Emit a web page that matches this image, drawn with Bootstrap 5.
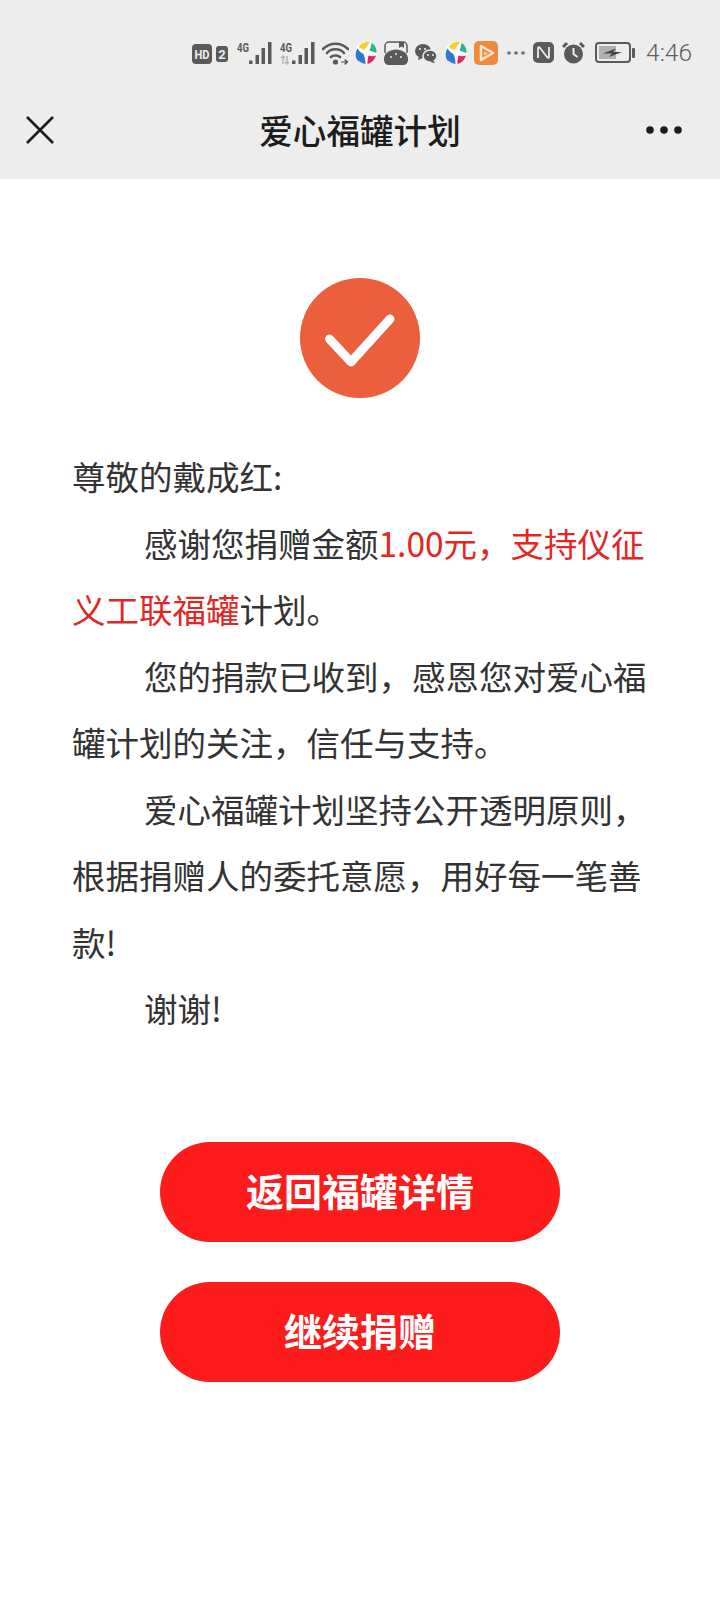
<!DOCTYPE html>
<html lang="zh-CN">
  <head>
    <meta charset="UTF-8" />
    <meta name="viewport" content="width=device-width, initial-scale=1.0" />
    <title>爱心福罐计划</title>
    <link href="https://cdn.jsdelivr.net/npm/bootstrap@5.3.0/dist/css/bootstrap.min.css" rel="stylesheet" />
    <style>
      body {
        font-family: "Noto Sans CJK SC", "Liberation Sans", sans-serif;
        background-color: #fff;
        color: #333;
      }
      .top-area {
        height: 179px;
        background-color: #ededed;
      }
      .status-row {
        height: 86px;
        padding-top: 41px;
        padding-right: 28px;
        gap: 8px;
        color: #5a5a5a;
      }
      .status-row svg {
        display: block;
        flex: none;
      }
      .tight-1 { margin-right: -1px; }
      .tight-2 { margin-right: -2px; }
      .wide-1 { margin-right: 1px; }
      .wide-2 { margin-right: 2px; }
      .status-time {
        font-family: Roboto, "Liberation Sans", sans-serif;
        font-weight: 300;
        font-size: 24.5px;
        line-height: 24px;
        color: #5f5f5f;
      }
      .title-row {
        height: 88px;
        padding: 0 26px;
      }
      .title-side {
        flex: 1 1 0;
      }
      .dots-icon {
        margin-right: 12px;
      }
      .page-title {
        font-size: 33.6px;
        font-weight: 500;
        color: #1c1c1c;
      }
      .done-circle {
        width: 120px;
        height: 120px;
        margin: 99px auto 0;
        background-color: #ec5f3c;
      }
      .message {
        margin: 45px 72px 0;
        font-size: 33.5px;
        line-height: 66.5px;
      }
      .message p {
        margin: 0;
        text-indent: 72px;
      }
      .message p.greeting {
        text-indent: 0;
      }
      .hot-text {
        color: #e3261f;
      }
      .btn-stack {
        margin-top: 100px;
        gap: 40px;
      }
      .btn-pill {
        width: 400px;
        height: 100px;
        padding-bottom: 10px;
        border-radius: 50px;
        border: 0;
        background-color: #fd1b1b;
        color: #fff;
        font-size: 38px;
        font-weight: 700;
      }
    </style>
  </head>
  <body>
    <div class="top-area">
      <div class="status-row d-flex justify-content-end align-items-start">
        <svg width="36" height="24" viewBox="0 0 36 24" class="wide-1">
          <rect y="3" width="20" height="20" rx="4" fill="#5a5a5a" />
          <text x="2.500" y="18" font-size="13" font-weight="700" font-family="Roboto" textLength="15" lengthAdjust="spacingAndGlyphs" fill="#ededed">HD</text>
          <rect x="24" y="5" width="12" height="16" rx="3" fill="#5a5a5a" />
          <text x="30" y="18" font-size="13" font-weight="700" font-family="Roboto" text-anchor="middle" fill="#ededed">2</text>
        </svg>
        <svg width="35" height="24" viewBox="0 0 35 24">
          <text x="0" y="11" font-size="13" font-weight="700" font-family="Roboto" textLength="12" lengthAdjust="spacingAndGlyphs" fill="#5a5a5a">4G</text>
          <path d="M12 19.500h3.500V23H12zM18.500 14H22v9h-3.500zM24.500 7H28v16h-3.500zM31 1h3.500v22H31z" fill="#5a5a5a" />
        </svg>
        <svg width="35" height="24" viewBox="0 0 35 24" class="tight-1">
          <text x="0" y="11" font-size="13" font-weight="700" font-family="Roboto" textLength="12" lengthAdjust="spacingAndGlyphs" fill="#5a5a5a">4G</text>
          <path d="M3 15v8M1 17l2-2 2 2M7 15v8M5 21l2 2 2-2" fill="none" stroke="#b5b5b5" stroke-width="1.500" />
          <path d="M12 19.500h3.500V23H12zM18.500 14H22v9h-3.500zM24.500 7H28v16h-3.500zM31 1h3.500v22H31z" fill="#5a5a5a" />
        </svg>
        <svg width="27" height="24" viewBox="0 0 27 24" class="tight-2">
          <path d="M1 8c7-7 18-7 25 0M5 12c4-5 13-5 17 0M9 16c2-2 7-2 9 0" fill="none" stroke="#5a5a5a" stroke-width="2.600" stroke-linecap="round" />
          <circle cx="13.500" cy="21" r="2.600" fill="#5a5a5a" />
          <path d="M19 21h3M23 18.500l3 2.500-3 2.500z" fill="#5a5a5a" stroke="#5a5a5a" stroke-width="1" />
        </svg>
        <svg width="22" height="24" viewBox="0 0 22 24" class="tight-1">
          <circle cx="11" cy="12" r="11" fill="#fff" />
          <path d="M3.500 6C6 2 11 0 15 1.500L9 9C7 8 5 7 3.500 6z" fill="#f5cf2a" />
          <path d="M16.500 2C20 4 22 8 21.500 12L14.500 9.500C15.500 7 16 5 16.500 2z" fill="#27b58c" />
          <path d="M21 14.500C20 18 17 22 12.500 23 12 21 13 17 13.500 14.500 16 15.500 18.500 15.500 21 14.500z" fill="#e5265d" />
          <path d="M2.500 7.500C0 11 0 16 2.500 19.500 5 21 8 22.500 10.500 23 10.500 19 9.500 15.500 8.500 13 6 12 4 10 2.500 7.500z" fill="#2e79d6" />
        </svg>
        <svg width="24" height="24" viewBox="0 0 24 24" class="tight-1">
          <path d="M1 12V5a4 4 0 0 1 4-4h14a4 4 0 0 1 4 4v7" fill="none" stroke="#5a5a5a" stroke-width="1.500" />
          <path d="M15 1h5v6l-2.500-1.500L15 7z" fill="#5a5a5a" />
          <path d="M0 18C0 12 6 8.500 12 8.500S24 12 24 18c0 4-2 6-5 6H5c-3 0-5-2-5-6z" fill="#5a5a5a" />
          <circle cx="7" cy="16" r="1" fill="#ededed" /><circle cx="12" cy="13" r="1" fill="#ededed" /><circle cx="17" cy="16" r="1" fill="#ededed" />
        </svg>
        <svg width="22" height="24" viewBox="0 0 22 24">
          <ellipse cx="8" cy="10" rx="8" ry="7" fill="#5a5a5a" />
          <path d="M4 15l-1 4 5-2z" fill="#5a5a5a" />
          <ellipse cx="15" cy="15" rx="7" ry="6" fill="#5a5a5a" stroke="#ededed" stroke-width="1.500" />
          <path d="M18 19l2 3-5-1z" fill="#5a5a5a" />
          <circle cx="5" cy="8" r="1.100" fill="#ededed" /><circle cx="10" cy="8" r="1.100" fill="#ededed" />
          <circle cx="13" cy="14" r="1" fill="#ededed" /><circle cx="18" cy="14" r="1" fill="#ededed" />
        </svg>
        <svg width="22" height="24" viewBox="0 0 22 24" class="tight-1">
          <circle cx="11" cy="12" r="11" fill="#fff" />
          <path d="M3.500 6C6 2 11 0 15 1.500L9 9C7 8 5 7 3.500 6z" fill="#f5cf2a" />
          <path d="M16.500 2C20 4 22 8 21.500 12L14.500 9.500C15.500 7 16 5 16.500 2z" fill="#27b58c" />
          <path d="M21 14.500C20 18 17 22 12.500 23 12 21 13 17 13.500 14.500 16 15.500 18.500 15.500 21 14.500z" fill="#e5265d" />
          <path d="M2.500 7.500C0 11 0 16 2.500 19.500 5 21 8 22.500 10.500 23 10.500 19 9.500 15.500 8.500 13 6 12 4 10 2.500 7.500z" fill="#2e79d6" />
        </svg>
        <svg width="24" height="24" viewBox="0 0 24 24" class="wide-1">
          <rect width="24" height="24" rx="5" fill="#f08a3c" />
          <path d="M7 5l12 7-12 7z" fill="#f08a3c" stroke="#fde6cf" stroke-width="2.500" stroke-linejoin="round" />
          <path d="M10 10.500l4 2-4 2z" fill="#fbd3a8" />
        </svg>
        <svg width="18" height="24" viewBox="0 0 18 24">
          <circle cx="2" cy="12" r="1.800" fill="#6e6e6e" /><circle cx="9" cy="12" r="1.800" fill="#6e6e6e" /><circle cx="16" cy="12" r="1.800" fill="#6e6e6e" />
        </svg>
        <svg width="21" height="24" viewBox="0 0 21 24">
          <rect y="1" width="21" height="21" rx="5" fill="#5a5a5a" />
          <path d="M5 17V7c0-1 1-1 2 0l7 9c1 1 2 1 2 0V6" fill="none" stroke="#ededed" stroke-width="1.800" />
        </svg>
        <svg width="23" height="24" viewBox="0 0 23 24" class="wide-2">
          <circle cx="11.500" cy="13" r="9.500" fill="#5a5a5a" />
          <path d="M11.500 7v6l4 3" fill="none" stroke="#ededed" stroke-width="2" />
          <path d="M1 6l4-4M22 6l-4-4" stroke="#5a5a5a" stroke-width="3" />
        </svg>
        <svg width="41" height="24" viewBox="0 0 41 24" class="wide-2">
          <rect x="1" y="2" width="34" height="19" rx="3" fill="none" stroke="#5a5a5a" stroke-width="2" />
          <rect x="4" y="5" width="17" height="13" fill="#b0b0b0" />
          <path d="M8 12.500l13-5-3 3.500h9l-13 5 3-3.500z" fill="#444" />
          <rect x="37" y="7" width="3" height="10" rx="1" fill="#5a5a5a" />
        </svg>
        <span class="status-time">4:46</span>
      </div>
      <div class="title-row d-flex align-items-center">
        <div class="title-side">
          <svg class="d-block" width="28" height="28" viewBox="0 0 28 28">
            <path d="M1 1l26 26M27 1L1 27" stroke="#1c1c1c" stroke-width="2.600" />
          </svg>
        </div>
        <span class="page-title">爱心福罐计划</span>
        <div class="title-side d-flex justify-content-end">
          <svg class="d-block dots-icon" width="36" height="8" viewBox="0 0 36 8">
            <circle cx="4" cy="4" r="3.800" fill="#1c1c1c" /><circle cx="18" cy="4" r="3.800" fill="#1c1c1c" /><circle cx="32" cy="4" r="3.800" fill="#1c1c1c" />
          </svg>
        </div>
      </div>
    </div>

    <div class="done-circle rounded-circle d-flex align-items-center justify-content-center">
      <svg width="120" height="120" viewBox="0 0 120 120">
        <path d="M29.500 61L51 84 90 41" fill="none" stroke="#fff" stroke-width="9" stroke-linecap="round" stroke-linejoin="round" />
      </svg>
    </div>

    <div class="message">
      <p class="greeting">尊敬的戴成红:</p>
      <p>感谢您捐赠金额<span class="hot-text">1.00元，支持仪征义工联福罐</span>计划。</p>
      <p>您的捐款已收到，感恩您对爱心福罐计划的关注，信任与支持。</p>
      <p>爱心福罐计划坚持公开透明原则，根据捐赠人的委托意愿，用好每一笔善款!</p>
      <p>谢谢!</p>
    </div>

    <div class="btn-stack d-flex flex-column align-items-center">
      <button type="button" class="btn btn-pill">返回福罐详情</button>
      <button type="button" class="btn btn-pill">继续捐赠</button>
    </div>

    <script src="https://cdn.jsdelivr.net/npm/bootstrap@5.3.0/dist/js/bootstrap.bundle.min.js"></script>
  </body>
</html>
